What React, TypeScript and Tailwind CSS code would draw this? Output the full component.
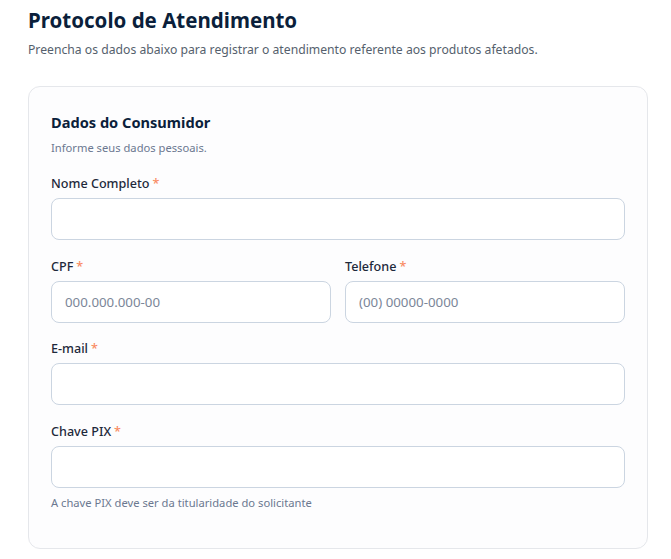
import React from "react";

function Label({ children }: { children: React.ReactNode }) {
  return (
    <label className="flex items-center gap-[3px] text-[12.6px] font-medium leading-5 text-[#1e293b]">
      {children}
      <span className="text-[#f98b63]">*</span>
    </label>
  );
}

function Input({ placeholder }: { placeholder?: string }) {
  return (
    <input
      placeholder={placeholder}
      className="h-[42px] w-full rounded-[8px] border border-[#cbd5e1] bg-white px-[13px] text-[13.3px] text-[#1e293b] outline-none placeholder:text-[#7b8698]"
    />
  );
}

export default function App() {
  return (
    <div
      className="min-h-[559px] bg-white pl-[28px] pt-[6px] pr-[23px] pb-[9px]"
      style={{ fontFamily: '"Noto Sans", "Open Sans", sans-serif' }}
    >
      <h1 className="text-[20.5px] font-bold leading-[28px] text-[#0b1f3b]">
        Protocolo de Atendimento
      </h1>
      <p className="mt-[6px] text-[12.2px] leading-5 text-[#555f6d]">
        Preencha os dados abaixo para registrar o atendimento referente aos produtos afetados.
      </p>
      <div className="mt-[26px] rounded-[12px] border border-[#e5e7eb] bg-[#fdfdfe] px-[22px] pt-[23px] pb-[37px]">
        <h2 className="text-[14.6px] font-bold leading-6 text-[#0b1f3b]">Dados do Consumidor</h2>
        <p className="mt-[6px] text-[11.2px] leading-4 text-[#6b7890]">Informe seus dados pessoais.</p>
        <div className="mt-[18px] flex flex-col gap-[4px]">
          <Label>Nome Completo</Label>
          <Input />
        </div>
        <div className="mt-[17px] grid grid-cols-2 gap-[14px]">
          <div className="flex flex-col gap-[4px]">
            <Label>CPF</Label>
            <Input placeholder="000.000.000-00" />
          </div>
          <div className="flex flex-col gap-[4px]">
            <Label>Telefone</Label>
            <Input placeholder="(00) 00000-0000" />
          </div>
        </div>
        <div className="mt-[16px] flex flex-col gap-[4px]">
          <Label>E-mail</Label>
          <Input />
        </div>
        <div className="mt-[17px] flex flex-col gap-[4px]">
          <Label>Chave PIX</Label>
          <Input />
        </div>
        <p className="mt-[7px] text-[11.2px] leading-4 text-[#6b7890]">
          A chave PIX deve ser da titularidade do solicitante
        </p>
      </div>
    </div>
  );
}
